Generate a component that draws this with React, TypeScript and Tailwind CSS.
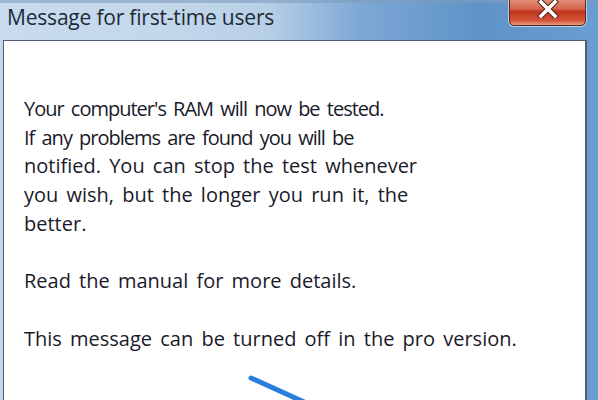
import React from "react";

const CloseButton = () => (
  <div className="absolute right-[12px] top-[-6px] w-[77px] h-[32px] rounded-[5px] border border-[#5a2a22] bg-[linear-gradient(180deg,#e8a592_0%,#d7664f_45%,#c0361f_55%,#d3553a_85%,#e79a7d_100%)] shadow-[0_0_0_1px_rgba(255,255,255,0.5)] flex items-center justify-center">
    <svg width="22" height="18" viewBox="0 0 22 18" className="mt-[-2px]">
      <path
        d="M4 2 L18 16 M18 2 L4 16"
        stroke="#4a1a12"
        strokeWidth="5.5"
        strokeLinecap="square"
      />
      <path
        d="M4 2 L18 16 M18 2 L4 16"
        stroke="#ffffff"
        strokeWidth="3.6"
        strokeLinecap="square"
      />
    </svg>
  </div>
);

const App = () => {
  return (
    <div className="w-[598px] h-[400px] overflow-hidden flex flex-col bg-[linear-gradient(90deg,#c2d6ea_0%,#bcd2e8_40%,#8fb3da_55%,#6f9dcf_75%,#6a9bd0_100%)] font-['Open_Sans','Noto_Sans',sans-serif]">
      <div className="relative h-[40px] shrink-0 bg-[linear-gradient(90deg,#c8dbee_0%,#c3d7eb_30%,#b7cfe6_45%,#7ea8d5_60%,#5f93c8_80%,#6a9dd0_100%)]">
        <div className="absolute inset-x-0 top-0 h-[3px] bg-[#7e9cbc] opacity-60" />
        <div className="pl-[7px] pt-[2px] text-[21px] leading-[30px] text-[#1e2a36] tracking-[-0.2px]">
          Message for first-time users
        </div>
        <CloseButton />
      </div>
      <div className="flex-1 ml-[3px] mr-[11px] border-l border-t border-r-2 border-[#4f5f70] bg-white relative">
        <div className="pl-[20px] pt-[54px] text-[20px] leading-[28.7px] text-[#1a1a2a] [word-spacing:3px]">
          <p>
            <span className="tracking-[-1px]">Your computer's RAM will now be tested.</span>
            <br />
            <span className="tracking-[-1px]">If any problems are found you will be</span>
            <br />
            notified. You can stop the test whenever
            <br />
            you wish, but the longer you run it, the
            <br />
            better.
          </p>
          <p className="mt-[28.7px]">Read the manual for more details.</p>
          <p className="mt-[28.7px]">This message can be turned off in the pro version.</p>
        </div>
        <svg
          className="absolute left-[240px] top-[330px]"
          width="90"
          height="40"
          viewBox="0 0 90 40"
        >
          <path d="M7 7 L80 40" stroke="#2b7fdc" strokeWidth="5" strokeLinecap="round" />
        </svg>
      </div>
    </div>
  );
};

export default App;
